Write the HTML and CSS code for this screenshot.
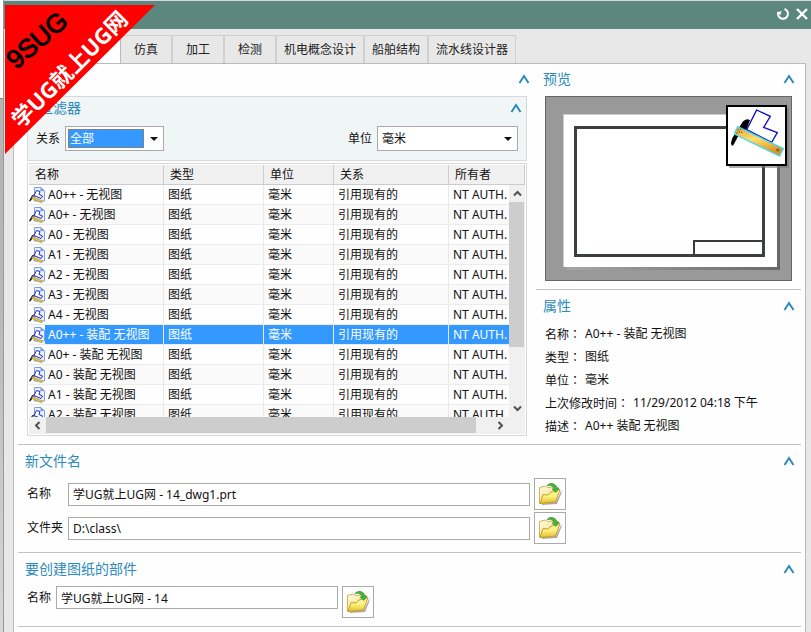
FILE: index.html
```html
<!DOCTYPE html>
<html lang="zh-CN">
<head>
<meta charset="utf-8">
<title>新建</title>
<link rel="stylesheet" href="styles.css">
</head>
<body>
<svg class="defs" aria-hidden="true">
  <defs>
    <linearGradient id="folderBack" x1="0" y1="0" x2="1" y2="1"><stop offset="0" stop-color="#fffbe0"/><stop offset="1" stop-color="#f2d978"/></linearGradient>
    <linearGradient id="folderFront" x1="0" y1="0" x2="0" y2="1"><stop offset="0" stop-color="#fff8a8"/><stop offset=".5" stop-color="#fdf07c"/><stop offset="1" stop-color="#e3bc2c"/></linearGradient>
    <linearGradient id="ruler" x1="0" y1="0" x2=".4" y2="1"><stop offset="0" stop-color="#e6a030"/><stop offset=".5" stop-color="#ffdf70"/><stop offset="1" stop-color="#e09420"/></linearGradient>
    <linearGradient id="shade" x1="0" y1="0" x2="1" y2="0"><stop offset="0" stop-color="#a6a6a6"/><stop offset="1" stop-color="#686868"/></linearGradient>
  </defs>
  <symbol id="i-up" viewBox="0 0 12 10"><path d="M1.500 9 6 2l4.500 7" fill="none" stroke="#2d8abc" stroke-width="2"/></symbol>
  <symbol id="i-drop" viewBox="0 0 8 4"><path d="M0 0h8L4 4z" fill="#111"/></symbol>
  <symbol id="i-sheet" viewBox="0 0 16 16">
    <path d="M5.500.5h6.500l3.500 3.500v10h-10z" fill="#e8f2ff" stroke="#7d9fdc"/>
    <path d="M11.500.5V4h4z" fill="#6d94dc"/>
    <path d="M7.500 3.500 11 4.500 10 7.500l3.500 1.500-1.500 2.500-7-3z" fill="#fff" stroke="#2222e8"/>
    <path d="M5 7.500 3 8.500 0 14l1 .5L4 11z" fill="#111"/>
    <path d="m3.500 9.500 10 4.500-.8 2-10-4.500z" fill="#e8c440" stroke="#8c8440" stroke-width=".5"/>
  </symbol>
  <symbol id="i-open" viewBox="0 0 24 24">
    <path d="M4 21.500 18 20l5.500-12v3L19 22 4 23z" fill="#aaa"/>
    <path d="m1.500 5.500 6-1.500 2 1.500L19 4.500l1.500 4L17 20 1.500 21.500z" fill="url(#folderBack)" stroke="#d6b24c"/>
    <path d="m2 21.500 3-9 5 .5 3-3 9-2.500-4.500 12.500z" fill="url(#folderFront)" stroke="#c99e28"/>
    <path d="M9 3.500Q13-.5 17.500 3l1 3H21l-3 4.500L14 7h2Q15 2.500 9 3.500z" fill="#43b63c" stroke="#238a2c" stroke-width=".6"/>
  </symbol>
</svg>

<div class="backdrop"></div>
<div class="dialog">
  <header class="titlebar">
    <button class="title-btn" aria-label="重置"><svg width="14" height="14" viewBox="0 0 14 14"><path d="M8.500 2A5 5 0 1 1 2.300 5" fill="none" stroke="#fff" stroke-width="2"/><path d="M.5 5.500 5.500 4 4.500 8z" fill="#fff"/></svg></button>
    <button class="title-btn" aria-label="关闭"><svg width="12" height="12" viewBox="0 0 12 12"><path d="m1 1 10 10M11 1 1 11" stroke="#fff" stroke-width="2.400"/></svg></button>
  </header>

  <nav class="tabs">
    <button class="tab active" aria-label="图纸"></button>
    <button class="tab">仿真</button>
    <button class="tab">加工</button>
    <button class="tab">检测</button>
    <button class="tab">机电概念设计</button>
    <button class="tab">船舶结构</button>
    <button class="tab">流水线设计器</button>
  </nav>

  <main class="panel">
    <div class="columns">
      <section class="templates">
        <div class="bar"><button class="fold" aria-label="折叠模板"><svg><use href="#i-up"/></svg></button></div>
        <div class="filter">
          <div class="bar"><h2>过滤器</h2><button class="fold" aria-label="折叠过滤器"><svg><use href="#i-up"/></svg></button></div>
          <div class="filter-row">
            <label for="rel">关系</label>
            <div class="combo"><select id="rel" class="picked"><option>全部</option></select><svg class="drop"><use href="#i-drop"/></svg></div>
            <label for="unit" class="push">单位</label>
            <div class="combo wide"><select id="unit"><option>毫米</option></select><svg class="drop"><use href="#i-drop"/></svg></div>
          </div>
        </div>

        <div class="list">
          <div class="viewport">
            <table>
              <colgroup><col class="c-name"><col class="c-type"><col class="c-unit"><col class="c-rel"><col></colgroup>
              <thead><tr><th>名称</th><th>类型</th><th>单位</th><th>关系</th><th>所有者</th></tr></thead>
              <tbody>
                <tr><td><span class="item"><svg><use href="#i-sheet"/></svg><span>A0++ - 无视图</span></span></td><td>图纸</td><td>毫米</td><td>引用现有的</td><td>NT AUTH.</td></tr>
                <tr><td><span class="item"><svg><use href="#i-sheet"/></svg><span>A0+ - 无视图</span></span></td><td>图纸</td><td>毫米</td><td>引用现有的</td><td>NT AUTH.</td></tr>
                <tr><td><span class="item"><svg><use href="#i-sheet"/></svg><span>A0 - 无视图</span></span></td><td>图纸</td><td>毫米</td><td>引用现有的</td><td>NT AUTH.</td></tr>
                <tr><td><span class="item"><svg><use href="#i-sheet"/></svg><span>A1 - 无视图</span></span></td><td>图纸</td><td>毫米</td><td>引用现有的</td><td>NT AUTH.</td></tr>
                <tr><td><span class="item"><svg><use href="#i-sheet"/></svg><span>A2 - 无视图</span></span></td><td>图纸</td><td>毫米</td><td>引用现有的</td><td>NT AUTH.</td></tr>
                <tr><td><span class="item"><svg><use href="#i-sheet"/></svg><span>A3 - 无视图</span></span></td><td>图纸</td><td>毫米</td><td>引用现有的</td><td>NT AUTH.</td></tr>
                <tr><td><span class="item"><svg><use href="#i-sheet"/></svg><span>A4 - 无视图</span></span></td><td>图纸</td><td>毫米</td><td>引用现有的</td><td>NT AUTH.</td></tr>
                <tr class="selected"><td><span class="item"><svg><use href="#i-sheet"/></svg><span>A0++ - 装配 无视图</span></span></td><td>图纸</td><td>毫米</td><td>引用现有的</td><td>NT AUTH.</td></tr>
                <tr><td><span class="item"><svg><use href="#i-sheet"/></svg><span>A0+ - 装配 无视图</span></span></td><td>图纸</td><td>毫米</td><td>引用现有的</td><td>NT AUTH.</td></tr>
                <tr><td><span class="item"><svg><use href="#i-sheet"/></svg><span>A0 - 装配 无视图</span></span></td><td>图纸</td><td>毫米</td><td>引用现有的</td><td>NT AUTH.</td></tr>
                <tr><td><span class="item"><svg><use href="#i-sheet"/></svg><span>A1 - 装配 无视图</span></span></td><td>图纸</td><td>毫米</td><td>引用现有的</td><td>NT AUTH.</td></tr>
                <tr><td><span class="item"><svg><use href="#i-sheet"/></svg><span>A2 - 装配 无视图</span></span></td><td>图纸</td><td>毫米</td><td>引用现有的</td><td>NT AUTH.</td></tr>
              </tbody>
            </table>
          </div>
          <div class="vscroll">
            <button aria-label="向上滚动"><svg width="9" height="9" viewBox="0 0 9 9"><path d="m1 6.500 3.500-3.500L8 6.500"/></svg></button>
            <div class="thumb"></div>
            <div class="track"></div>
            <button aria-label="向下滚动"><svg width="9" height="9" viewBox="0 0 9 9"><path d="m1 2.500 3.500 3.500L8 2.500"/></svg></button>
          </div>
          <div class="hscroll">
            <button aria-label="向左滚动"><svg width="9" height="9" viewBox="0 0 9 9"><path d="M6.500 1 3 4.500 6.500 8"/></svg></button>
            <div class="thumb"></div>
            <div class="track"></div>
            <button aria-label="向右滚动"><svg width="9" height="9" viewBox="0 0 9 9"><path d="M2.500 1 6 4.500 2.500 8"/></svg></button>
          </div>
        </div>
      </section>

      <aside class="details">
        <section class="preview">
          <div class="bar"><h2>预览</h2><button class="fold" aria-label="折叠预览"><svg><use href="#i-up"/></svg></button></div>
          <svg class="drawing" viewBox="0 0 247 185" role="img" aria-label="图纸预览">
            <rect x=".5" y=".5" width="246" height="184" fill="#999" stroke="#666"/>
            <rect x="22" y="22" width="213" height="152" fill="url(#shade)"/>
            <rect x="18" y="18" width="214" height="153" fill="#fff"/>
            <path d="M18.500 171V18.500H232" fill="none" stroke="#ccc"/>
            <rect x="30.500" y="31.500" width="188" height="128" fill="none" stroke="#3c403e" stroke-width="3"/>
            <path d="M149 159v-14h70" fill="none" stroke="#3c3c3c" stroke-width="2"/>
            <rect x="184" y="12" width="60" height="60" fill="#777" opacity=".6"/>
            <rect x="182" y="10" width="59" height="59" fill="#fff" stroke="#000" stroke-width="2"/>
            <g transform="translate(175 2) scale(.33333)">
              <path d="M90 66 82 64Q70 66 64 78L46 106Q36 118 33 134L35 143 40 142 56 112 80 94z" fill="#000"/>
              <path d="m110 36 41 19-20 33 41 16-17 29-75-38z" fill="#fff" stroke="#1010c0" stroke-width="4"/>
              <path d="m53 86 137 66-11 22-136-66z" fill="url(#ruler)" stroke="#3dd9f0" stroke-width="4"/>
              <g fill="#604018"><circle cx="54" cy="96" r="2"/><circle cx="62" cy="94" r="2"/><circle cx="58" cy="102" r="2"/><circle cx="51" cy="105" r="2"/><circle cx="65" cy="103" r="2"/></g>
              <circle cx="173" cy="156" r="3" fill="#bbb" stroke="#222" stroke-width="2"/>
            </g>
          </svg>
        </section>
        <section class="props">
          <div class="bar"><h2>属性</h2><button class="fold" aria-label="折叠属性"><svg><use href="#i-up"/></svg></button></div>
          <dl>
            <div><dt>名称<span class="colon" lang="zh-TW">：</span></dt><dd>A0++ - 装配 无视图</dd></div>
            <div><dt>类型<span class="colon" lang="zh-TW">：</span></dt><dd>图纸</dd></div>
            <div><dt>单位<span class="colon" lang="zh-TW">：</span></dt><dd>毫米</dd></div>
            <div><dt>上次修改时间<span class="colon" lang="zh-TW">：</span></dt><dd>11/29/2012 04:18 下午</dd></div>
            <div><dt>描述<span class="colon" lang="zh-TW">：</span></dt><dd>A0++ 装配 无视图</dd></div>
          </dl>
        </section>
      </aside>
    </div>

    <section class="group">
      <div class="bar"><h2>新文件名</h2><button class="fold" aria-label="折叠新文件名"><svg><use href="#i-up"/></svg></button></div>
      <div class="field"><label for="fname">名称</label><input id="fname" type="text" value="学UG就上UG网 - 14_dwg1.prt"><button class="open" aria-label="浏览文件"><svg><use href="#i-open"/></svg></button></div>
      <div class="field"><label for="folder">文件夹</label><input id="folder" type="text" value="D:\class\"><button class="open" aria-label="浏览文件夹"><svg><use href="#i-open"/></svg></button></div>
    </section>

    <section class="group part">
      <div class="bar"><h2>要创建图纸的部件</h2><button class="fold" aria-label="折叠部件"><svg><use href="#i-up"/></svg></button></div>
      <div class="field"><label for="part">名称</label><input id="part" type="text" value="学UG就上UG网 - 14"><button class="open" aria-label="浏览部件"><svg><use href="#i-open"/></svg></button></div>
    </section>
    <div class="group end"></div>
  </main>
</div>

<svg class="ribbon" viewBox="0 0 150 150" role="img" aria-label="9SUG">
  <path d="M0 0h150L0 149z" fill="#f00"/>
  <text class="brand" transform="translate(11 65) rotate(-41)">9SUG</text>
  <text class="slogan" transform="translate(16 124) rotate(-45)">学UG就上UG网</text>
</svg>
</body>
</html>
```
FILE: styles.css
```css
* { box-sizing: border-box; }

body {
  margin: 0;
  min-height: 100vh;
  display: flex;
  overflow: hidden;
  background: #e8e8e8;
  color: #111;
  font: 12px/20px "Noto Sans", "Noto Sans CJK SC", sans-serif;
}

.defs { position: absolute; width: 0; height: 0; }
h2, dl, dd { margin: 0; }
h2 { color: #2d8abc; font-size: 14px; font-weight: 400; line-height: 20px; }
button { padding: 0; border: 0; background: none; color: inherit; font: inherit; }
input, select { font: inherit; color: inherit; }
svg { display: block; flex: none; }

.backdrop {
  width: 4px;
  border-right: 1px solid #999;
  background: linear-gradient(#fff 98px, #888 98px, #888 99px, #b4b4b4 99px, #b8b8b8 300px, #d8d8d8);
}

.dialog {
  flex: 1;
  min-width: 0;
  min-height: 100vh;
  display: flex;
  flex-direction: column;
  border-top: 1px solid #d8d8e4;
}

.titlebar {
  height: 28px;
  flex: none;
  display: flex;
  justify-content: flex-end;
  align-items: center;
  gap: 6px;
  padding: 0 3px 2px 0;
  background: #5b877f;
}

.tabs {
  display: flex;
  flex: none;
  height: 34px;
  padding: 6px 0 0 10px;
}
.tab {
  min-width: 52px;
  padding: 0 7px;
  border-top: 1px solid #d0d0d0;
  border-right: 2px solid #d0d0d0;
  color: #222;
}
.tab:last-child { border-right-width: 1px; }
.tab.active {
  width: 107px;
  padding: 0;
  border-right: 1px solid #bbb;
  background: #fff;
}

.panel {
  flex: 1;
  margin: 0 5px 0 9px;
  padding: 0 4px;
  border: 1px solid #bbb;
  border-bottom: 0;
  background: #fefefe;
}

.columns {
  display: grid;
  grid-template-columns: 509fr 265fr;
  gap: 9px;
}
.templates { padding: 5px 0 8px 9px; }
.bar { display: flex; align-items: center; height: 20px; }
.fold { margin-left: auto; }
.fold svg { width: 12px; height: 10px; }
.templates > .bar { padding: 0 0 0 12px; margin-right: -3px; }

.filter {
  margin-top: 7px;
  padding: 1px 8px 9px;
  border: 1px solid #d8d8d8;
  background: #f0f6f6;
}
.filter > .bar { margin-right: -4px; padding-left: 3px; }
.filter-row { display: flex; align-items: center; margin-top: 8px; }
.push { margin-left: auto; }
.combo {
  width: 99px;
  height: 25px;
  margin-left: 5px;
  padding: 2px;
  display: flex;
  align-items: center;
  border: 1px solid #aaa;
  background: #fff;
}
.combo.wide { width: 141px; }
.combo select {
  flex: 1;
  min-width: 0;
  height: 19px;
  padding: 0 2px;
  appearance: none;
  border: 0;
  background: none;
}
.combo .picked {
  background: #3399ff;
  color: #fff;
  outline: 1px dotted #c66a10;
  outline-offset: -1px;
}
.drop { width: 8px; height: 4px; margin: 0 3px 0 6px; }

.list {
  display: grid;
  grid-template-columns: 1fr 16px;
  grid-template-rows: 20px 232px 17px;
  margin-top: 2px;
  padding: 1px;
  border: 1px solid #d8d8d8;
}
.viewport { grid-area: 1 / 1 / 3 / 3; overflow: hidden; }
table { width: 100%; table-layout: fixed; border-collapse: separate; border-spacing: 0; }
.c-name { width: 135px; }
.c-type { width: 100px; }
.c-unit { width: 70px; }
.c-rel { width: 115px; }
th {
  height: 20px;
  padding: 0 6px;
  border-right: 1px solid #ccc;
  border-bottom: 1px solid #ccc;
  background: #f0f0f0;
  font-weight: 400;
  line-height: 19px;
  text-align: left;
}
td {
  height: 20px;
  padding: 0 4px;
  overflow: hidden;
  border-right: 1px solid #e8e8e8;
  border-bottom: 1px solid #ececec;
  line-height: 19px;
  white-space: nowrap;
}
tbody tr:nth-child(even) { background: #fafafa; }
td:first-child { padding: 0; }
.item { display: flex; align-items: center; }
.item svg { width: 16px; height: 16px; }
.item span { flex: 1; padding-left: 3px; }
.selected td { color: #fff; background: #3399ff; }
.selected td:first-child { background: none; }
.selected .item span { background: #3399ff; }

.vscroll { grid-area: 2 / 2; display: flex; flex-direction: column; background: #f0f0f0; }
.hscroll { grid-area: 3 / 1 / 4 / 3; display: flex; padding-right: 16px; background: #f0f0f0; }
.vscroll button, .hscroll button { display: grid; place-items: center; flex: none; width: 17px; height: 17px; }
.vscroll path, .hscroll path { fill: none; stroke: #505050; stroke-width: 2; }
.vscroll .thumb { flex: 145; margin-right: 1px; background: #cdcdcd; }
.vscroll .track { flex: 53; }
.hscroll .thumb { flex: 430; margin-bottom: 1px; background: #cdcdcd; }
.hscroll .track { flex: 16; }

.preview { padding: 5px 9px 8px; border-bottom: 1px solid #c4c4c4; }
.preview .bar, .props .bar { margin: 0 -3px 0 -2px; }
.drawing { width: 100%; margin-top: 7px; }
.props { padding: 6px 9px 0; }
dl { margin-top: 6px; }
dl div { display: flex; gap: 4px; height: 23px; line-height: 23px; }
.colon { font-family: "Noto Sans CJK TC", sans-serif; }

.group {
  padding: 6px 6px 8px 7px;
  border-top: 1px solid #c4c4c4;
}
.group .field { margin: 2px 0 0 2px; }
.group .bar + .field { margin-top: 7px; }
.field { display: flex; align-items: center; }
.field label { width: 41px; }
.field input {
  flex: 0 1 462px;
  min-width: 0;
  height: 23px;
  padding: 0 4px;
  border: 1px solid #aaa;
  border-radius: 0;
  background: #fff;
}
.open {
  display: grid;
  place-items: center;
  width: 32px;
  height: 32px;
  margin-left: 4px;
  border: 1px solid #aaa;
  background: #fff;
}
.open svg { width: 24px; height: 24px; }
.part .field { align-items: flex-start; }
.part .field label { width: 29px; line-height: 23px; }
.part .field input { flex-basis: 282px; }

.ribbon { position: absolute; left: 5px; top: 5px; width: 150px; height: 150px; }
.brand { font: 26px "Liberation Sans", sans-serif; stroke: #000; stroke-width: 1; }
.slogan {
  fill: #fff;
  font: 700 22px "Noto Sans", "Noto Sans CJK SC", sans-serif;
}
```
